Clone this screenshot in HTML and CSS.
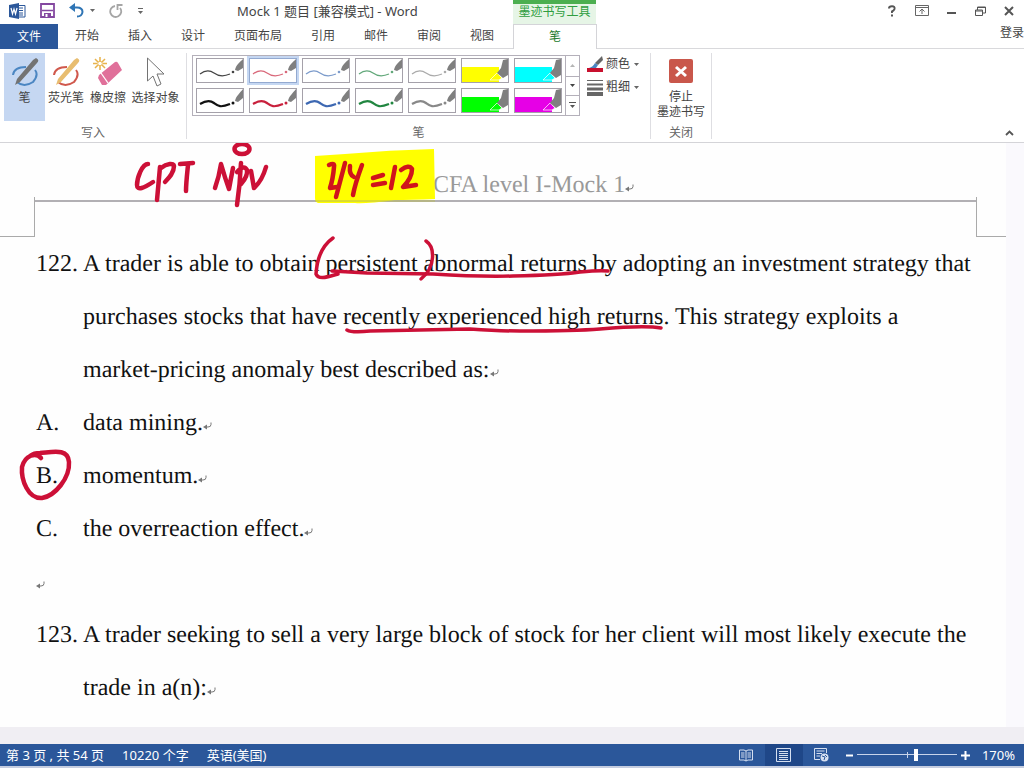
FILE: index.html
```html
<!DOCTYPE html>
<html lang="zh-CN">
<head>
<meta charset="utf-8">
<title>Mock 1 题目 [兼容模式] - Word</title>
<link rel="stylesheet" href="styles.css">
</head>
<body>
<svg class="defs" aria-hidden="true">
  <symbol id="stroke-thin" viewBox="0 0 46 23">
    <path d="M3 15C8 11 13 11 17 14S26 18 33 15" fill="none" stroke="currentColor" stroke-width="1.2"/>
    <circle cx="36" cy="13" r="1.3" fill="currentColor"/>
    <path d="M38 11C39 6 43 3 46 0V9L41 12Z" fill="#7f7f7f"/>
  </symbol>
  <symbol id="stroke-thick" viewBox="0 0 46 23">
    <path d="M3 15C8 12 13 11 17 14S23 19 33 15" fill="none" stroke="currentColor" stroke-width="2.2"/>
    <circle cx="36" cy="14" r="1.5" fill="currentColor"/>
    <path d="M38 12C39 7 43 4 46 0V9L41 13Z" fill="#7f7f7f"/>
  </symbol>
  <symbol id="marker" viewBox="0 0 46 23">
    <path d="M0 8H37V23H0Z" fill="currentColor"/>
    <path d="M28 21L35 14L40 19L37 21Z" fill="currentColor" stroke="#fff" stroke-opacity=".7"/>
    <path d="M35 14L39 9L41 1L46 0V16L41 19Z" fill="#7f7f7f"/>
  </symbol>
  <symbol id="ret" viewBox="0 0 10 8">
    <path d="M8 0.5V2.500Q8 5 5 5H2" fill="none" stroke="#777"/>
    <path d="M0 5L4 2.500V7.500Z" fill="#777"/>
  </symbol>
  <symbol id="down" viewBox="0 0 5 3"><path d="M0 0H5L2.500 3Z" fill="currentColor"/></symbol>
</svg>

<div class="app">
  <header class="titlebar">
    <div class="quick">
      <svg width="17" height="16" viewBox="0 0 17 16"><path d="M7 2.500H16V14H7" fill="#fff" stroke="#2b579a"/><path d="M10 5H14M10 7.500H14M10 10H14M10 12H14" stroke="#2b579a"/><path d="M0 2L10 0V16L0 14Z" fill="#2b579a"/><path d="M2 5L3.500 11L5 6L6.500 11L8 5" fill="none" stroke="#fff" stroke-width="1.200"/></svg>
      <button aria-label="保存"><svg width="15" height="15" viewBox="0 0 15 15"><path d="M1 1H14V14H1Z" fill="#fff" stroke="#8448a0" stroke-width="1.800"/><path d="M2 7.500H13" stroke="#8448a0" stroke-width="1.500"/><path d="M4 14V10H11V14Z" fill="#8448a0"/><path d="M5.500 11H7.500V14H5.500Z" fill="#fff"/></svg></button>
      <button class="undo" aria-label="撤消"><svg width="15" height="15" viewBox="0 0 15 15"><path d="M6 0V9L0 4.500Z" fill="#2f75b5"/><path d="M3 4.500H8Q13.500 4.500 13.500 9Q13 13.500 8 13.500" fill="none" stroke="#2f75b5" stroke-width="2"/></svg><svg class="caret" width="5" height="3"><use href="#down"/></svg></button>
      <button aria-label="重复"><svg width="14" height="14" viewBox="0 0 14 14"><path d="M6 2A5.500 5.500 0 1 0 11 4" fill="none" stroke="#a6a6a6" stroke-width="1.800"/><path d="M8.500 6V1H13.500" fill="none" stroke="#a6a6a6" stroke-width="1.800"/></svg></button>
      <button class="more" aria-label="自定义"><svg width="7" height="6" viewBox="0 0 7 6"><path d="M1 0.500H6" stroke="#666"/><path d="M1 3H6L3.500 6Z" fill="#666"/></svg></button>
    </div>
    <h1 class="title">Mock 1 题目 [兼容模式] - Word</h1>
    <div class="context">墨迹书写工具</div>
    <div class="window">
      <button aria-label="帮助"><svg width="10" height="12" viewBox="0 0 10 12"><path d="M2 3.500Q2 1.200 5 1.200Q8 1.200 7.500 4Q7 5.500 5 6.500V8M5 9.500V11.500" fill="none" stroke="#555" stroke-width="2"/></svg></button>
      <button aria-label="功能区选项"><svg width="14" height="11" viewBox="0 0 14 11"><path d="M.5.5H13.500V10.500H.5ZM.5 2.500H13.500M7 9V4.500M4.500 6.500L7 4L9.500 6.500" fill="none" stroke="#666"/></svg></button>
      <button aria-label="最小化"><svg width="10" height="12" viewBox="0 0 10 12"><path d="M0 8H9" stroke="#555" stroke-width="2"/></svg></button>
      <button aria-label="还原"><svg width="11" height="10" viewBox="0 0 11 10"><path d="M.5 4H7.500V9.500H.5ZM.5 5H7.500M2.500 4V1H10.500V7H8M2.500 1.500H10.500" fill="none" stroke="#555"/></svg></button>
      <button aria-label="关闭窗口"><svg width="10" height="10" viewBox="0 0 10 10"><path d="M1 1L9 9M9 1L1 9" stroke="#555" stroke-width="2"/></svg></button>
    </div>
  </header>

  <nav class="tabs">
    <button class="file">文件</button>
    <div class="tablist">
      <button>开始</button><button>插入</button><button>设计</button><button>页面布局</button><button>引用</button><button>邮件</button><button>审阅</button><button>视图</button>
    </div>
    <button class="active">笔</button>
    <a class="login" href="#">登录</a>
  </nav>

  <section class="ribbon">
    <div class="group">
      <div class="tools">
        <button class="tool on pen"><svg width="28" height="30" viewBox="0 0 28 30"><path d="M15 10Q3 10 2 18M24 13Q28 18 22 25Q13 31 6 25" fill="none" stroke="#4b86c2" stroke-width="2"/><path d="M25 1Q29 3 26 6L9 25L4 28L6 22L22 3Z" fill="#737373"/></svg><span>笔</span></button>
        <button class="tool hl"><svg width="28" height="30" viewBox="0 0 28 30"><path d="M15 10Q3 10 2 18M24 13Q28 18 22 25Q13 31 6 25" fill="none" stroke="#d0584c" stroke-width="2"/><path d="M25 1Q29 3 26 6L9 25L4 28L6 22L22 3Z" fill="#e8bd70"/></svg><span>荧光笔</span></button>
        <button class="tool er"><svg width="30" height="30" viewBox="0 0 30 30"><path d="M7 0V4M7 9V13M0 6.500H4M10 6.500H14M2 2L5 5M9 8L12 11M12 2L9 5M5 8L2 11" stroke="#e8b34c" stroke-width="1.500"/><circle cx="7" cy="6.500" r="2.300" fill="#fff" stroke="#e8b34c"/><path d="M22 5Q24 4 25 6L29 13L13 28L9 28L5 21L6 18Z" fill="#e0709a"/><path d="M8 16L15 26" stroke="#fff" stroke-width="1.300"/></svg><span>橡皮擦</span></button>
        <button class="tool sel"><svg width="20" height="30" viewBox="0 0 20 30"><path d="M1.500 1V24L7 19L11 29L15 27L11 17H18Z" fill="#fff" stroke="#737373"/></svg><span>选择对象</span></button>
      </div>
      <div class="label">写入</div>
    </div>
    <div class="group">
      <div class="pens">
        <div class="gallery">
          <div class="cells">
            <button class="cell black" aria-label="黑色细笔"><svg><use href="#stroke-thin"/></svg></button>
            <button class="cell red picked" aria-label="红色细笔"><svg><use href="#stroke-thin"/></svg></button>
            <button class="cell blue" aria-label="蓝色细笔"><svg><use href="#stroke-thin"/></svg></button>
            <button class="cell green" aria-label="绿色细笔"><svg><use href="#stroke-thin"/></svg></button>
            <button class="cell grey" aria-label="灰色细笔"><svg><use href="#stroke-thin"/></svg></button>
            <button class="cell yellow" aria-label="黄色荧光笔"><svg><use href="#marker"/></svg></button>
            <button class="cell cyan" aria-label="青色荧光笔"><svg><use href="#marker"/></svg></button>
            <button class="cell black2" aria-label="黑色粗笔"><svg><use href="#stroke-thick"/></svg></button>
            <button class="cell red2" aria-label="红色粗笔"><svg><use href="#stroke-thick"/></svg></button>
            <button class="cell blue2" aria-label="蓝色粗笔"><svg><use href="#stroke-thick"/></svg></button>
            <button class="cell green2" aria-label="绿色粗笔"><svg><use href="#stroke-thick"/></svg></button>
            <button class="cell grey2" aria-label="灰色粗笔"><svg><use href="#stroke-thick"/></svg></button>
            <button class="cell lime" aria-label="绿色荧光笔"><svg><use href="#marker"/></svg></button>
            <button class="cell magenta" aria-label="紫色荧光笔"><svg><use href="#marker"/></svg></button>
          </div>
          <div class="scroll">
            <button aria-label="上"><svg width="5" height="3" viewBox="0 0 5 3"><path d="M0 3H5L2.500 0Z" fill="#b5b5b5"/></svg></button>
            <button aria-label="下"><svg width="5" height="3"><use href="#down"/></svg></button>
            <button aria-label="更多"><svg width="7" height="7" viewBox="0 0 7 7"><path d="M0 .5H7" stroke="#555"/><path d="M1 3H6L3.500 6Z" fill="#555"/></svg></button>
          </div>
        </div>
        <div class="options">
          <button><svg width="17" height="17" viewBox="0 0 17 17"><path d="M0 12H16V16H0Z" fill="#c8102e"/><path d="M15 0L16 4L11 9L8 7Z" fill="#666"/><path d="M8 7L11 9L9 12H2Q6 11 8 7Z" fill="#4b86c2"/></svg><span>颜色</span><svg class="caret" width="5" height="3"><use href="#down"/></svg></button>
          <button><svg width="17" height="17" viewBox="0 0 17 17"><path d="M0 1.500H16" stroke="#666"/><path d="M0 5.500H16" stroke="#666" stroke-width="2"/><path d="M0 10H16" stroke="#666" stroke-width="3"/><path d="M0 15H16" stroke="#666" stroke-width="4"/></svg><span>粗细</span><svg class="caret" width="5" height="3"><use href="#down"/></svg></button>
        </div>
      </div>
      <div class="label">笔</div>
    </div>
    <div class="group">
      <button class="stop"><svg width="24" height="24" viewBox="0 0 24 24"><rect width="24" height="24" rx="2" fill="#c9574b"/><path d="M7 8L17 17M17 8L7 17" stroke="#fff" stroke-width="3"/></svg><span>停止<br>墨迹书写</span></button>
      <div class="label">关闭</div>
    </div>
    <button class="collapse" aria-label="折叠功能区"><svg width="9" height="6" viewBox="0 0 9 6"><path d="M1 5L4.500 1.500L8 5" fill="none" stroke="#555" stroke-width="1.800"/></svg></button>
  </section>

  <main class="workspace">
    <article class="page">
      <div class="pagehead">CFA level I-Mock 1<svg class="ret"><use href="#ret"/></svg></div>
      <div class="rule"><i class="corner left"></i><i class="line"></i><i class="corner right"></i></div>
      <div class="body">
        <div class="item"><span>122.</span><p>A trader is able to obtain persistent abnormal returns by adopting an investment strategy that<br>purchases stocks that have recently experienced high returns. This strategy exploits a<br>market-pricing anomaly best described as:<svg class="ret"><use href="#ret"/></svg></p></div>
        <div class="item"><span>A.</span><p>data mining.<svg class="ret"><use href="#ret"/></svg></p></div>
        <div class="item"><span>B.</span><p>momentum.<svg class="ret"><use href="#ret"/></svg></p></div>
        <div class="item"><span>C.</span><p>the overreaction effect.<svg class="ret"><use href="#ret"/></svg></p></div>
        <div class="item"><span><svg class="ret"><use href="#ret"/></svg></span></div>
        <div class="item"><span>123.</span><p>A trader seeking to sell a very large block of stock for her client will most likely execute the<br>trade in a(n):<svg class="ret"><use href="#ret"/></svg></p></div>
      </div>
    </article>
    <svg class="ink" width="1024" height="585" viewBox="0 143 1024 585" aria-hidden="true">
      <path d="M315 156L345 154Q390 150 434 149L435 199Q410 200 395 200Q365 204 355 203L318 203Q315 202 315 198Z" fill="#ffff00"/>
      <path d="M315 201H435" stroke="#b9b95a"/>
      <g fill="none" stroke="#cc1037" stroke-linecap="round" stroke-linejoin="round" stroke-width="4.500">
        <path d="M148 164C142 164 137 178 137 185C137 191 144 188 153 182"/>
        <path d="M160 167L157 200M161 168C167 163 174 163 174 166C174 173 169 178 165 182"/>
        <path d="M180 164L193 163M188 165C187 175 186 184 186 191"/>
        <path d="M215 188Q219 177 221 164Q225 178 229 189Q231 178 233 168"/>
        <path d="M241 163Q240 185 237 205M237 172Q244 164 247 170Q248 176 241 184"/>
        <path d="M251 171L254 188Q262 181 266 167"/>
        <ellipse cx="242" cy="149" rx="7.500" ry="5"/>
        <g stroke="#d0141c">
          <path d="M329 165Q335 162 334 167Q333 179 330 188L337 187"/>
          <path d="M345 163L336 197M350 166Q349 175 354 177M362 165Q355 184 353 195"/>
          <path d="M373 178L383 175M373 185L385 183"/>
          <path d="M395 167L391 188M401 170Q409 164 412 169Q412 178 403 187Q410 186 416 185"/>
        </g>
        <g stroke-width="3.500">
          <path d="M333 238C323 245 317 258 316 274C319 281 330 276 338 274"/>
          <path d="M332 271L367 273L433 274Q480 277 513 276Q560 275 580 272Q600 270 608 271"/>
          <path d="M426 241C435 247 436 267 421 279"/>
          <path d="M347 330Q352 333 370 331L470 329Q500 331 520 331Q575 331 600 329Q645 325 661 328"/>
        </g>
        <path d="M41 458C36 452 25 455 22 467C21 480 28 499 42 498C55 496 70 478 69 462C68 448 53 452 40 453Q34 453 30 456"/>
      </g>
    </svg>
  </main>

  <footer class="status">
    <div class="info"><span>第 3 页 , 共 54 页</span><span>10220 个字</span><span>英语(美国)</span></div>
    <div class="views">
      <button aria-label="阅读视图"><svg width="14" height="13" viewBox="0 0 14 13"><path d="M.5 1H5L7 2L9 1H13.500V11H9L7 12L5 11H.5ZM7 2V12M2 4H5.500M2 6H5.500M2 8H5.500M8.500 4H12M8.500 6H12M8.500 8H12" fill="none" stroke="#d5dff0"/></svg></button>
      <button class="current" aria-label="页面视图"><svg width="15" height="14" viewBox="0 0 15 14"><path d="M.5.5H14.500V13.500H.5ZM3 3.500H12M3 5.500H12M3 7.500H12M3 9.500H12M3 11.500H12" fill="none" stroke="#d5dff0"/></svg></button>
      <button aria-label="Web 版式"><svg width="15" height="14" viewBox="0 0 15 14"><path d="M6 11.500H.5V.5H12.500V5M2.500 3H10.500M2.500 5.500H8M2.500 8H6" fill="none" stroke="#d5dff0"/><circle cx="10.500" cy="9.500" r="4" fill="#d5dff0"/><path d="M8 8L11 9L10 12M11 7L13 9" fill="none" stroke="#2b579a"/></svg></button>
    </div>
    <div class="zoom">
      <button aria-label="缩小"><svg width="7" height="7" viewBox="0 0 7 7"><path d="M0 3.500H7" stroke="#fff" stroke-width="2"/></svg></button>
      <input type="range" min="0" max="100" value="59" aria-label="缩放">
      <button aria-label="放大"><svg width="9" height="9" viewBox="0 0 9 9"><path d="M0 4.500H9M4.500 0V9" stroke="#fff" stroke-width="2"/></svg></button>
      <span class="percent">170%</span>
    </div>
  </footer>
</div>
</body>
</html>
```
FILE: styles.css
```css
* { box-sizing: border-box; }
body { margin: 0; background: #fff; color: #444; font: 12px/16px "Noto Sans", "Noto Sans CJK SC", sans-serif; }
button { margin: 0; padding: 0; border: 0; background: none; color: inherit; font: inherit; display: flex; align-items: center; justify-content: center; }
svg { display: block; flex: none; }
.defs { position: absolute; width: 0; height: 0; }
.app { display: flex; flex-direction: column; min-height: 100vh; overflow: hidden; }
.caret { color: #666; }

.titlebar { display: grid; grid-template-columns: 237px 276px 83px 1fr; height: 24px; align-items: start; }
.quick { display: flex; align-items: center; gap: 14px; padding-left: 9px; height: 21px; }
.undo { gap: 6px; }
.title { margin: 0; font-size: 13px; font-weight: 400; line-height: 22px; white-space: nowrap; }
.context { align-self: stretch; border-top: 4px solid #4caf50; background: #e6f5e6; color: #2f9e3f; text-align: center; line-height: 16px; }
.window { display: flex; justify-content: flex-end; gap: 18px; padding-right: 10px; height: 21px; }
.window button { min-width: 10px; }

.tabs { display: flex; height: 25px; border-bottom: 1px solid #d9d9dc; align-items: stretch; }
.file { width: 58px; height: 25px; background: #2b579a; color: #fff; }
.tablist { display: flex; gap: 29px; width: 455px; padding-left: 17px; }
.active { width: 84px; height: 25px; background: #fff; border: 1px solid #d4d4d8; border-bottom: 0; color: #217a2b; }
.login { margin-left: auto; color: #444; text-decoration: none; line-height: 18px; }

.ribbon { display: flex; height: 94px; padding: 4px 0 3px; border-bottom: 1px solid #d4d4d8; }
.group { display: flex; flex-direction: column; justify-content: space-between; border-right: 1px solid #dedee2; padding: 0 4px; }
.label { text-align: center; line-height: 12px; color: #666; }
.tools { display: flex; }
.tool { flex-direction: column; justify-content: flex-start; padding-top: 4px; height: 68px; gap: 3px; white-space: nowrap; }
.on { background: #c5d7f2; }
.pen { width: 41px; }
.hl { width: 42px; }
.er { width: 42px; }
.sel { width: 53px; }
.pens { display: flex; gap: 7px; padding-top: 2px; }
.gallery { display: flex; border: 1px solid #b4b0ba; height: 61px; margin-left: 1px; }
.cells { display: grid; grid-template-columns: repeat(7, 48px); gap: 5px; padding: 2px 3px; align-content: start; }
.cell { width: 48px; height: 25px; border: 1px solid #a5a1aa; background: #fff; }
.cell svg { width: 46px; height: 23px; }
.picked { outline: 2px solid #c5d7f2; border-color: #93a9d0; }
.black { color: #444; } .black2 { color: #111; }
.red { color: #d9687a; } .red2 { color: #c8203c; }
.blue { color: #7c9bcb; } .blue2 { color: #3d68b2; }
.green { color: #62a87a; } .green2 { color: #218640; }
.grey { color: #aaa; } .grey2 { color: #888; }
.yellow { color: #ff0; } .cyan { color: #0ff; } .lime { color: #0f0; } .magenta { color: #e600e6; }
.scroll { display: grid; grid-template-rows: 1fr 1fr 1fr; width: 14px; border-left: 1px solid #b4b0ba; }
.scroll button + button { border-top: 1px solid #b4b0ba; }
.options { display: flex; flex-direction: column; gap: 7px; padding: 1px 7px 0 0; }
.options button { gap: 2px; height: 16px; }
.options .caret { margin-left: 2px; }
.stop { flex-direction: column; gap: 6px; padding-top: 6px; width: 52px; line-height: 15px; white-space: nowrap; }
.collapse { margin-left: auto; align-self: flex-end; width: 30px; height: 12px; }

.workspace { position: relative; display: flex; flex: 1; background: linear-gradient(#f0eef3, #f0eef3) bottom / 100% 17px no-repeat #faf9fd; padding-bottom: 17px; }
.page { flex: 1; margin-right: 18px; background: #fefefe; color: #111; font: 24px/53px "Liberation Serif", serif; text-rendering: geometricPrecision; white-space: nowrap; }
.pagehead { padding: 26px 0 0 433px; height: 54px; line-height: 32px; color: #999; }
.rule { display: grid; grid-template-columns: 35px 1fr 30px; height: 40px; }
.line { border-top: 2px solid #b2b0b4; margin-top: 3px; }
.corner { border-bottom: 1px solid #aaa; }
.left { border-right: 1px solid #aaa; }
.right { border-left: 1px solid #aaa; }
.body { padding-top: 1px; }
.item { display: flex; padding-left: 36px; min-height: 53px; }
.item:last-child { margin-bottom: -16px; }
.item span { width: 47px; }
.item p { margin: 0; }
.ret { display: inline-block; width: 10px; height: 8px; }
.ink { position: absolute; left: 0; top: 0; }

.status { display: flex; align-items: center; height: 24px; background: #2b579a; color: #fff; border-bottom: 2px solid #c5cde0; font-size: 13px; }
.info { display: flex; gap: 18px; padding-left: 6px; }
.views { display: flex; margin-left: auto; align-self: stretch; }
.views button { width: 38px; }
.views .current { background: #1f4788; }
.zoom { display: flex; align-items: center; gap: 4px; padding: 0 9px 0 5px; }
.zoom input { appearance: none; width: 100px; height: 14px; margin: 0; background: linear-gradient(#c8d4ea, #c8d4ea) 0 6px / 100% 1px no-repeat, linear-gradient(#c8d4ea, #c8d4ea) 50px 4px / 1px 6px no-repeat; }
.zoom input::-webkit-slider-thumb { appearance: none; width: 4px; height: 12px; background: #fff; }
.percent { margin-left: 8px; }
```
